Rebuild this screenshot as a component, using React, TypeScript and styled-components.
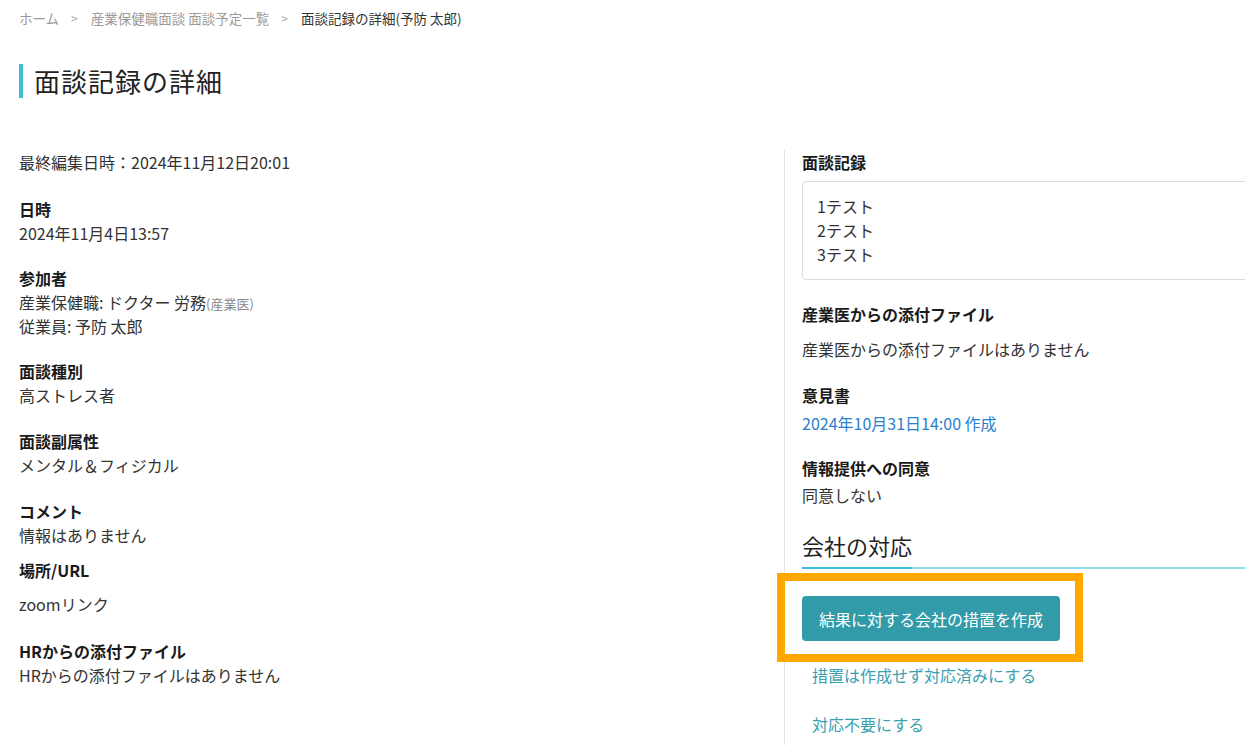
import React from "react";
import styled, { createGlobalStyle } from "styled-components";

const Global = createGlobalStyle`
  html, body { margin: 0; padding: 0; background: #fff; }
  body {
    overflow: hidden;
    font-family: "Noto Sans CJK JP", "Noto Sans", sans-serif;
    color: #333;
    -webkit-font-smoothing: antialiased;
  }
`;

const Page = styled.div`
  width: 1600px;
  padding: 0 19px;
  box-sizing: border-box;
`;

const Breadcrumb = styled.nav`
  display: flex;
  align-items: center;
  padding-top: 8px;
  font-size: 13.5px;
  line-height: 20px;
`;

const Crumb = styled.span<{ $current?: boolean }>`
  color: ${(p) => (p.$current ? "#333" : "#9a9a9a")};
`;

const Sep = styled.span`
  color: #aaa;
  font-size: 12px;
  margin: 0 13px 0 12px;
`;

const Title = styled.h1`
  margin: 36px 0 0;
  border-left: 4px solid #3ec0d8;
  padding-left: 11px;
  font-size: 26px;
  letter-spacing: 1px;
  line-height: 34px;
  font-weight: 400;
  color: #222;
`;

const Columns = styled.div`
  display: grid;
  grid-template-columns: 765px 1fr;
  margin-top: 52px;
  min-height: 600px;
`;

const LeftCol = styled.div`
  display: flex;
  flex-direction: column;
`;

const RightCol = styled.div`
  border-left: 1px solid #e2e2e8;
  padding-left: 17px;
  display: flex;
  flex-direction: column;
`;

const Field = styled.div<{ $mt?: number }>`
  margin-top: ${(p) => (p.$mt ?? 22)}px;
  font-size: 16px;
  line-height: 24px;
`;

const Label = styled.div<{ $mb?: number }>`
  font-weight: 700;
  color: #1a1a1a;
  margin-bottom: ${(p) => p.$mb ?? 0}px;
`;

const Value = styled.div`
  color: #333;
  height: 24px;
`;

const Sub = styled.span`
  font-size: 13px;
  line-height: 1;
  color: #888;
`;

const RecordBox = styled.div`
  margin-top: 7px;
  border: 1px solid #dcdcdc;
  border-radius: 4px;
  padding: 12px 14px 13px;
  font-size: 16px;
  line-height: 24px;
  color: #333;
`;

const BlueLink = styled.a`
  color: #2a7fcf;
  text-decoration: none;
`;

const SectionHeading = styled.h2`
  margin: 22px 0 0;
  font-size: 22px;
  font-weight: 400;
  line-height: 32px;
  color: #222;
  border-bottom: 2px solid #8edfea;
`;

const HeadingText = styled.span`
  display: inline-block;
  padding-bottom: 6px;
  margin-bottom: -2px;
  border-bottom: 2px solid #3ebfd8;
`;

const Highlight = styled.div`
  align-self: flex-start;
  margin: 4px 0 0 -25px;
  border: 8px solid #ffa900;
  padding: 15px 15px 13px 17px;
`;

const PrimaryButton = styled.button`
  display: block;
  width: 258px;
  height: 45px;
  border: none;
  border-radius: 4px;
  background: #329ba9;
  color: #fff;
  font-family: inherit;
  font-size: 16px;
  cursor: pointer;
`;

const TextAction = styled.a<{ $mt: number }>`
  display: block;
  margin-top: ${(p) => p.$mt}px;
  padding-left: 10px;
  font-size: 16px;
  line-height: 24px;
  color: #3aa0b0;
  text-decoration: none;
`;

export default function App() {
  return (
    <Page>
      <Global />
      <Breadcrumb>
        <Crumb>ホーム</Crumb>
        <Sep>&gt;</Sep>
        <Crumb>産業保健職面談 面談予定一覧</Crumb>
        <Sep>&gt;</Sep>
        <Crumb $current>面談記録の詳細(予防 太郎)</Crumb>
      </Breadcrumb>
      <Title>面談記録の詳細</Title>
      <Columns>
        <LeftCol>
          <Field $mt={0}>
            <Value>最終編集日時：2024年11月12日20:01</Value>
          </Field>
          <Field $mt={23}>
            <Label>日時</Label>
            <Value>2024年11月4日13:57</Value>
          </Field>
          <Field $mt={21}>
            <Label>参加者</Label>
            <Value>
              産業保健職: ドクター 労務<Sub>(産業医)</Sub>
            </Value>
            <Value>従業員: 予防 太郎</Value>
          </Field>
          <Field $mt={21}>
            <Label>面談種別</Label>
            <Value>高ストレス者</Value>
          </Field>
          <Field>
            <Label>面談副属性</Label>
            <Value>メンタル＆フィジカル</Value>
          </Field>
          <Field>
            <Label>コメント</Label>
            <Value>情報はありません</Value>
          </Field>
          <Field $mt={11}>
            <Label $mb={10}>場所/URL</Label>
            <Value>zoomリンク</Value>
          </Field>
          <Field $mt={23}>
            <Label>HRからの添付ファイル</Label>
            <Value>HRからの添付ファイルはありません</Value>
          </Field>
        </LeftCol>
        <RightCol>
          <Field $mt={0}>
            <Label>面談記録</Label>
            <RecordBox>
              <div>1テスト</div>
              <div>2テスト</div>
              <div>3テスト</div>
            </RecordBox>
          </Field>
          <Field $mt={22}>
            <Label $mb={11}>産業医からの添付ファイル</Label>
            <Value>産業医からの添付ファイルはありません</Value>
          </Field>
          <Field>
            <Label $mb={4}>意見書</Label>
            <BlueLink href="#">2024年10月31日14:00 作成</BlueLink>
          </Field>
          <Field $mt={21}>
            <Label $mb={3}>情報提供への同意</Label>
            <Value>同意しない</Value>
          </Field>
          <SectionHeading>
            <HeadingText>会社の対応</HeadingText>
          </SectionHeading>
          <Highlight>
            <PrimaryButton>結果に対する会社の措置を作成</PrimaryButton>
          </Highlight>
          <TextAction href="#" $mt={1}>
            措置は作成せず対応済みにする
          </TextAction>
          <TextAction href="#" $mt={25}>
            対応不要にする
          </TextAction>
        </RightCol>
      </Columns>
    </Page>
  );
}
